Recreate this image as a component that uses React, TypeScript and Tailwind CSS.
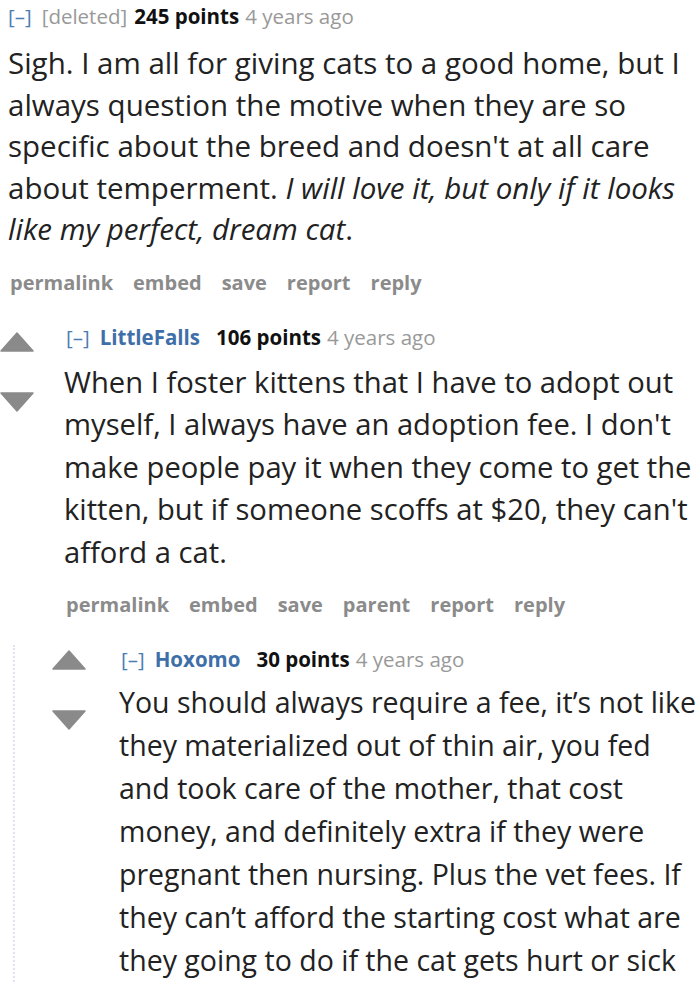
const font = { fontFamily: '"Open Sans", "Noto Sans", sans-serif' };

function UpArrow() {
  return (
    <svg width="34" height="20" viewBox="0 0 34 20">
      <path d="M17 1 L33 19 L1 19 Z" fill="#8a8a8a" stroke="#8a8a8a" strokeWidth="1.5" strokeLinejoin="round" />
    </svg>
  );
}

function DownArrow() {
  return (
    <svg width="34" height="20" viewBox="0 0 34 20">
      <path d="M1 1 L33 1 L17 19 Z" fill="#8a8a8a" stroke="#8a8a8a" strokeWidth="1.5" strokeLinejoin="round" />
    </svg>
  );
}

interface TaglineProps {
  author: string;
  deleted?: boolean;
  points: string;
}

function Tagline({ author, deleted, points }: TaglineProps) {
  return (
    <div className="flex items-baseline text-[20.5px] leading-[28px] whitespace-nowrap">
      <span className="text-[#4a7cb5] mr-[10px]">[–]</span>
      {deleted ? (
        <span className="text-[#999] mr-[7px]">[deleted]</span>
      ) : (
        <span className="text-[#3e6fa8] font-bold mr-[16px]">{author}</span>
      )}
      <span className="text-[#111] font-bold mr-[6px]">{points}</span>
      <span className="text-[#999]">4 years ago</span>
    </div>
  );
}

function Buttons({ items }: { items: string[] }) {
  return (
    <div className="flex gap-[20px] text-[20px] leading-[28px] font-bold text-[#8b8b8b]">
      {items.map((b) => (
        <span key={b}>{b}</span>
      ))}
    </div>
  );
}

export default function App() {
  return (
    <div className="bg-white w-[700px] h-[987px] overflow-hidden text-[#222]" style={font}>
      {/* top comment */}
      <div className="pl-[8px] pt-[2px]">
        <Tagline author="" deleted points="245 points" />
        <div className="text-[29.5px] leading-[41.5px] mt-[12px] pr-[8px]">
          Sigh. I am all for giving cats to a good home, but I always question the motive when they are so
          specific about the breed and doesn't at all care about temperment.{" "}
          <em>I will love it, but only if it looks like my perfect, dream cat</em>.
        </div>
        <div className="mt-[19px] pl-[2px]">
          <Buttons items={["permalink", "embed", "save", "report", "reply"]} />
        </div>
      </div>

      {/* child comment */}
      <div className="flex mt-[26px]">
        <div className="w-[64px] shrink-0 flex flex-col pt-[9px]">
          <UpArrow />
          <div className="mt-[40px]">
            <DownArrow />
          </div>
        </div>
        <div className="flex-1">
          <div className="pl-[2px]">
            <Tagline author="LittleFalls" points="106 points" />
          </div>
          <div className="text-[29.2px] leading-[42.5px] mt-[10px]">
            When I foster kittens that I have to adopt out myself, I always have an adoption fee. I don't make
            people pay it when they come to get the kitten, but if someone scoffs at $20, they can't afford a cat.
          </div>
          <div className="mt-[18px] pl-[2px]">
            <Buttons items={["permalink", "embed", "save", "parent", "report", "reply"]} />
          </div>
        </div>
      </div>

      {/* grandchild comment */}
      <div className="flex mt-[26px] ml-[13px] border-l-2 border-dotted border-[#e2e2f2]">
        <div className="w-[104px] shrink-0 flex flex-col pt-[5px] pl-[37px]">
          <UpArrow />
          <div className="mt-[40px]">
            <DownArrow />
          </div>
        </div>
        <div className="flex-1">
          <div className="pl-[2px]">
            <Tagline author="Hoxomo" points="30 points" />
          </div>
          <div className="text-[28.5px] leading-[43px] mt-[8px]">
            You should always require a fee, it’s not like they materialized out of thin air, you fed and took
            care of the mother, that cost money, and definitely extra if they were pregnant then nursing. Plus the
            vet fees. If they can’t afford the starting cost what are they going to do if the cat gets hurt or sick
          </div>
        </div>
      </div>
    </div>
  );
}
